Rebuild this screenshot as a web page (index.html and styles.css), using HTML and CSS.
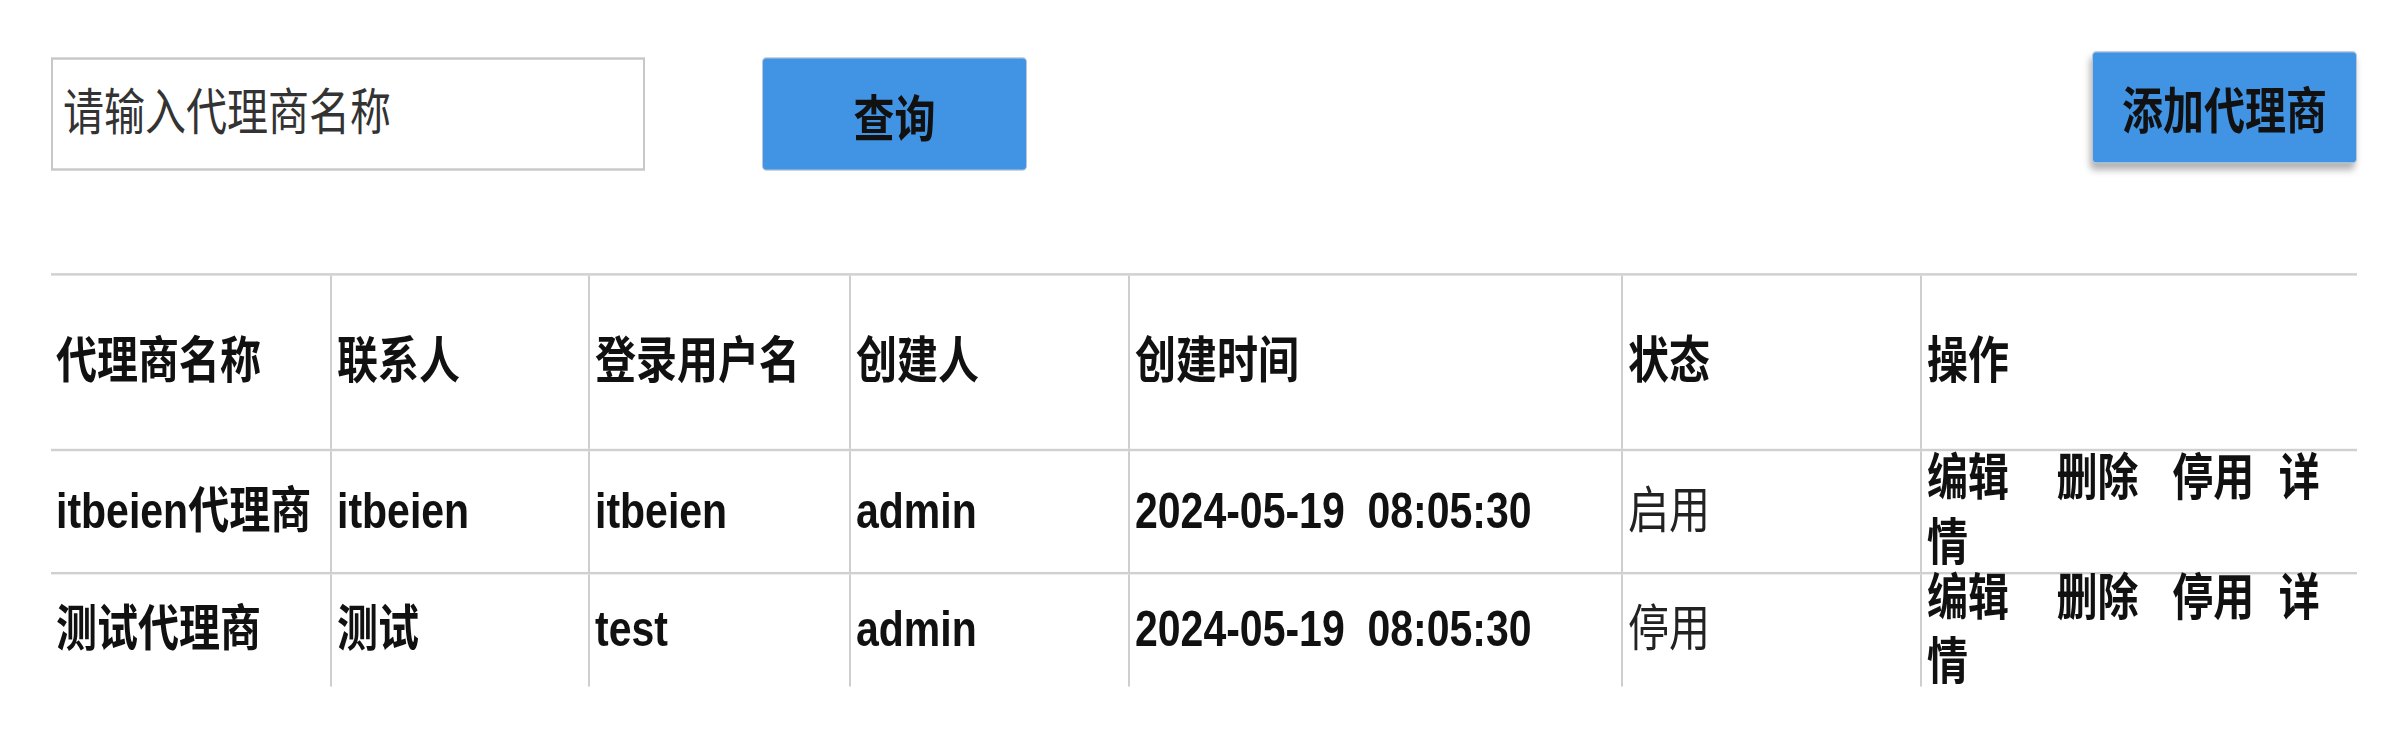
FILE: index.html
```html
<!DOCTYPE html>
<html lang="zh-CN">
<head>
<meta charset="utf-8">
<title>代理商管理</title>
<link rel="stylesheet" href="styles.css">
</head>
<body>
<div class="page">
  <div class="toolbar">
    <input class="search" type="text" placeholder="请输入代理商名称">
    <button class="btn btn-query" type="button">查询</button>
    <button class="btn btn-add" type="button">添加代理商</button>
  </div>
  <div class="grid">
    <div class="row head">
      <div class="cell">代理商名称</div>
      <div class="cell">联系人</div>
      <div class="cell">登录用户名</div>
      <div class="cell">创建人</div>
      <div class="cell">创建时间</div>
      <div class="cell">状态</div>
      <div class="cell">操作</div>
    </div>
    <div class="row r1">
      <div class="cell">itbeien代理商</div>
      <div class="cell">itbeien</div>
      <div class="cell">itbeien</div>
      <div class="cell">admin</div>
      <div class="cell">2024-05-19&nbsp; 08:05:30</div>
      <div class="cell normal">启用</div>
      <div class="cell"><div class="ops"><span class="op op-edit">编辑</span><span class="op op-del">删除</span><span class="op op-stop">停用</span><span class="op">详</span><span class="op">情</span></div></div>
    </div>
    <div class="row r2">
      <div class="cell">测试代理商</div>
      <div class="cell">测试</div>
      <div class="cell">test</div>
      <div class="cell">admin</div>
      <div class="cell">2024-05-19&nbsp; 08:05:30</div>
      <div class="cell normal">停用</div>
      <div class="cell"><div class="ops"><span class="op op-edit">编辑</span><span class="op op-del">删除</span><span class="op op-stop">停用</span><span class="op">详</span><span class="op">情</span></div></div>
    </div>
  </div>
</div>
</body>
</html>
```

FILE: styles.css
```css
html {
  margin: 0;
  padding: 0;
  background: #ffffff;
  overflow: hidden;
}

body {
  margin: 0;
  padding: 0;
  min-height: 736px;
  font-family: "Liberation Sans", "Noto Sans CJK SC", sans-serif;
  color: #111111;
}

/* the page is drawn vertically stretched, as in the original capture */
.page {
  padding: 0 51px;
  font-size: 41px;
  transform: scaleY(1.2195);
  transform-origin: 0 0;
}

.toolbar {
  display: flex;
  align-items: flex-start;
  padding-top: 42px;
}

.search {
  margin-top: 5px;
  width: 594px;
  height: 93px;
  box-sizing: border-box;
  border: 2px solid #c8c8c8;
  padding: 0 10px;
  font: inherit;
  color: #333333;
  background: #ffffff;
  outline: none;
}

.search::placeholder {
  color: #333333;
  opacity: 1;
}

.btn {
  box-sizing: border-box;
  width: 265px;
  padding: 0;
  font: inherit;
  font-weight: bold;
  color: #111111;
  background: #4094e3;
  border: 1px solid #b7c7d8;
  border-radius: 4px;
}

.btn-query {
  margin-top: 5px;
  margin-left: 117px;
  height: 93px;
}

.btn-add {
  margin-left: auto;
  height: 92px;
  box-shadow: -2px 5px 7px rgba(0, 0, 0, 0.3);
}

.grid {
  margin-top: 84px;
}

.row {
  display: grid;
  grid-template-columns: 279px 258px 261px 279px 493px 299px 437px;
  grid-template-rows: minmax(0, 1fr);
  border-top: 2px solid #d0d0d0;
  box-sizing: border-box;
}

.head { height: 143.5px; }
.r1 { height: 101.7px; }
.r2 { height: 93.5px; }

.cell {
  display: flex;
  align-items: center;
  min-width: 0;
  padding: 0 5px;
  font-weight: bold;
  line-height: 1.3;
  white-space: nowrap;
  border-left: 2px solid #cecece;
}

.cell:first-child {
  border-left: 0;
}

.normal {
  font-weight: normal;
  color: #222222;
}

.ops {
  width: 100%;
  white-space: normal;
}

.op-edit { margin-right: 47.6px; }
.op-del { margin-right: 33.6px; }
.op-stop { margin-right: 24.6px; }
```
